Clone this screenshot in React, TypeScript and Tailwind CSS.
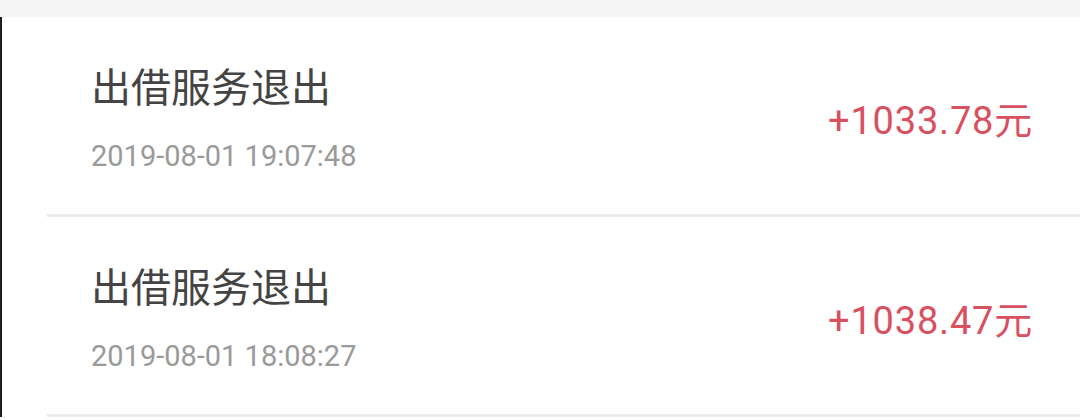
const records = [
  { title: "出借服务退出", time: "2019-08-01 19:07:48", amount: "+1033.78元" },
  { title: "出借服务退出", time: "2019-08-01 18:08:27", amount: "+1038.47元" },
];

function RecordRow({ title, time, amount }: { title: string; time: string; amount: string }) {
  return (
    <div className="flex h-[197px] items-center justify-between pl-[89px] pr-[47px]">
      <div className="flex flex-col pt-[8px]">
        <span className="text-[40px] leading-[44px] text-[#444444]">{title}</span>
        <span className="mt-[29px] text-[29px] leading-[32px] text-[#9a9a9a]">{time}</span>
      </div>
      <span className="mt-[10px] text-[38px] leading-[44px] tracking-[0.8px] text-[#d9505f]">{amount}</span>
    </div>
  );
}

export default function App() {
  return (
    <div
      className="h-[420px] w-[1080px] overflow-hidden bg-white"
      style={{ fontFamily: "Roboto, 'Noto Sans CJK SC', sans-serif" }}
    >
      <div className="h-[17px] bg-[#f5f5f5]" />
      <div className="border-l-2 border-[#1e1e1e]">
        {records.map((r, i) => (
          <div key={i}>
            <RecordRow {...r} />
            <div className="ml-[45px] h-[3px] bg-[#ececec]" />
          </div>
        ))}
      </div>
    </div>
  );
}
